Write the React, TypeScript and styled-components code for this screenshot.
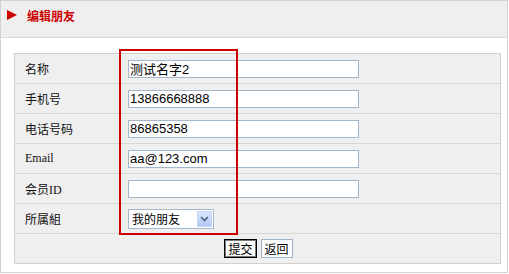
import React from "react";
import styled, { createGlobalStyle } from "styled-components";

const Global = createGlobalStyle`
  html, body { margin: 0; padding: 0; background: #ffffff; }
  body { font-family: "Liberation Serif", "Noto Sans CJK SC", serif; font-size: 12px; color: #000; }
  * { box-sizing: border-box; }
`;

const Panel = styled.div`
  position: relative;
  width: 508px;
  height: 273px;
  border: 1px solid #d2d2d2;
  background: #ffffff;
`;

const Header = styled.div`
  height: 37px;
  background: #efefef;
  border-bottom: 1px solid #dadada;
  display: flex;
  align-items: flex-start;
  padding: 9px 0 0 6px;
  gap: 10px;
`;

const Triangle = styled.span`
  width: 0;
  height: 0;
  border-left: 10px solid #cc0000;
  border-top: 5px solid transparent;
  border-bottom: 5px solid transparent;
`;

const Title = styled.span`
  font-family: "Noto Sans CJK SC", sans-serif;
  font-weight: bold;
  font-size: 12px;
  line-height: 12px;
  color: #cc0000;
`;

const Body = styled.div`
  padding: 15px 6px 0 13px;
`;

const Form = styled.div`
  border: 1px solid #d0d0d0;
  background: #efefef;
`;

const Row = styled.div`
  display: grid;
  grid-template-columns: 113px 1fr;
  align-items: center;
  height: 30px;
  border-bottom: 1px solid #d6d6d6;
`;

const Label = styled.div`
  padding-left: 10px;
  font-family: "Liberation Serif", "Noto Sans CJK SC", serif;
  font-size: 12px;
  color: #111;
`;

const Field = styled.div`
  display: flex;
  align-items: center;
`;

const TextInput = styled.input`
  width: 231px;
  height: 18px;
  border: 1px solid #a5b8cb;
  background: #ffffff;
  padding: 0 1px;
  font-family: "Liberation Sans", "Noto Sans CJK SC", sans-serif;
  font-size: 13px;
  color: #000;
  outline: none;
`;

const SelectBox = styled.div`
  position: relative;
  width: 86px;
  height: 20px;
  border: 1px solid #a5b8cb;
  background: #ffffff;
  display: flex;
  align-items: center;
  padding-left: 3px;
  font-family: "Noto Sans CJK SC", sans-serif;
  font-size: 12px;
`;

const ArrowBtn = styled.span`
  position: absolute;
  right: 1px;
  top: 1px;
  width: 15px;
  height: 16px;
  background: linear-gradient(#dbe6fb, #b4c8f5);
  border: 1px solid #c3d3fd;
  border-radius: 1px;
  display: flex;
  align-items: center;
  justify-content: center;
`;

const ButtonRow = styled.div`
  display: flex;
  justify-content: center;
  align-items: center;
  gap: 4px;
  height: 29px;
  padding-left: 2px;
`;

const Btn = styled.button<{ $focused?: boolean }>`
  height: 19px;
  padding: 0 3px;
  margin: 0;
  background: #fdfdfd;
  border: 1px solid ${(p) => (p.$focused ? "#000" : "#9fb3c6")};
  box-shadow: ${(p) => (p.$focused ? "inset 0 0 0 1px #7a7a7a" : "none")};
  font-family: "Noto Sans CJK SC", sans-serif;
  font-size: 12px;
  line-height: 15px;
  color: #000;
  cursor: pointer;
`;

const Highlight = styled.div`
  position: absolute;
  left: 118px;
  top: 48px;
  width: 119px;
  height: 186px;
  border: 2px solid #cc0000;
  pointer-events: none;
`;

const rows: { label: string; value: string }[] = [
  { label: "名称", value: "测试名字2" },
  { label: "手机号", value: "13866668888" },
  { label: "电话号码", value: "86865358" },
  { label: "Email", value: "aa@123.com" },
  { label: "会员ID", value: "" },
];

export default function App() {
  return (
    <>
      <Global />
      <Panel>
        <Header>
          <Triangle />
          <Title>编辑朋友</Title>
        </Header>
        <Body>
          <Form>
            {rows.map((r) => (
              <Row key={r.label}>
                <Label>{r.label}</Label>
                <Field>
                  <TextInput defaultValue={r.value} readOnly />
                </Field>
              </Row>
            ))}
            <Row>
              <Label>所属組</Label>
              <Field>
                <SelectBox>
                  我的朋友
                  <ArrowBtn>
                    <svg width="9" height="6" viewBox="0 0 9 6">
                      <path d="M1 1 L4.5 4.5 L8 1" fill="none" stroke="#4d6185" strokeWidth="1.6" />
                    </svg>
                  </ArrowBtn>
                </SelectBox>
              </Field>
            </Row>
            <ButtonRow>
              <Btn $focused>提交</Btn>
              <Btn>返回</Btn>
            </ButtonRow>
          </Form>
        </Body>
        <Highlight />
      </Panel>
    </>
  );
}
